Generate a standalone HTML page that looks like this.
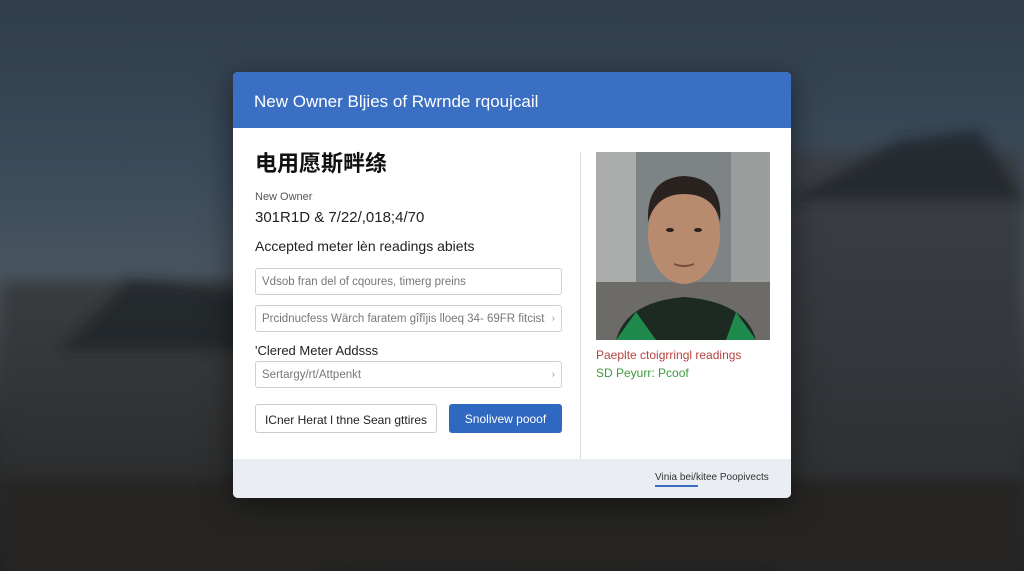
<!DOCTYPE html>
<html><head><meta charset="utf-8"><style>
*{margin:0;padding:0;box-sizing:border-box}
body{width:1024px;height:571px;overflow:hidden;font-family:"Liberation Sans","Noto Sans CJK SC",sans-serif;position:relative;
background:linear-gradient(180deg,#2f3d4c 0%,#3b4b5a 30%,#4a5661 50%,#2b2f33 75%,#1c1e20 100%)}
.bg1{position:absolute;left:0;top:280px;width:330px;height:291px;background:linear-gradient(180deg,#3a3d40,#262626);filter:blur(8px)}
.bg2{position:absolute;left:780px;top:150px;width:244px;height:421px;background:linear-gradient(180deg,#3c4046,#2a2c2e);filter:blur(8px)}
.bg3{position:absolute;left:0;top:480px;width:1024px;height:91px;background:#262523;filter:blur(6px)}
.card{position:absolute;left:233px;top:72px;width:558px;height:426px;background:#fff;border-radius:5px;overflow:hidden;box-shadow:0 6px 30px rgba(0,0,0,.5)}
.hd{height:56px;background:#3a6fc4;color:#fff;font-size:17px;padding:20px 0 0 21px}
.t{position:absolute;font-size:13px;color:#222;white-space:nowrap}
.in{position:absolute;left:22px;width:307px;height:27px;border:1px solid #cfcfcf;border-radius:3px;font-size:11.5px;color:#777;padding:7px 0 0 6px;white-space:nowrap;overflow:hidden}
.in span{position:absolute;right:6px;top:7px;color:#999;font-size:10px}
.ft{position:absolute;left:0;top:387px;width:558px;height:39px;background:#eaedf3}
</style></head><body>
<div class="bg1"></div><div class="bg2"></div><div class="bg3"></div>
<svg style="position:absolute;left:0;top:0" width="1024" height="571"><g fill="#1e2226" opacity=".7" filter="url(#b)"><path d="M60 350 L130 280 L230 290 L300 350 Z"/><path d="M790 200 L900 140 L980 130 L1024 200 Z"/></g><defs><filter id="b"><feGaussianBlur stdDeviation="6"/></filter></defs></svg>
<div class="card">
<div class="hd">New Owner Bljies of Rwrnde rqoujcail</div>
<div class="t" style="left:22px;top:74px;font-size:22px;font-weight:bold;color:#111">电用愿斯畔绦</div>
<div class="t" style="left:22px;top:119px;font-size:11px;color:#555">New Owner</div>
<div class="t" style="left:22px;top:137px;font-size:15px">301R1D &amp; 7/22/,018;4/70</div>
<div class="t" style="left:22px;top:166px;font-size:14px">Accepted meter lèn readings abiets</div>
<div class="in" style="top:196px">Vdsob fran del of cqoures, timerg preins</div>
<div class="in" style="top:233px">Prcidnucfess Wärch faratem gîfîjis lloeq 34- 69FR fitcist<span>›</span></div>
<div class="t" style="left:22px;top:271px;font-size:13px">'Clered Meter Addsss</div>
<div class="in" style="top:289px">Sertargy/rt/Attpenkt<span>›</span></div>
<div style="position:absolute;left:22px;top:332px;width:182px;height:29px;border:1px solid #ccc;border-radius:3px;font-size:12px;color:#222;text-align:center;padding-top:8px">ICner Herat l thne Sean gttires</div>
<div style="position:absolute;left:216px;top:332px;width:113px;height:29px;background:#2f68c0;border-radius:3px;font-size:12px;color:#fff;text-align:center;padding-top:8px">Snolivew pooof</div>
<div style="position:absolute;left:347px;top:80px;width:1px;height:307px;background:#ddd"></div>
<svg style="position:absolute;left:363px;top:80px" width="174" height="188"><rect width="174" height="188" fill="#7e8486"/><rect x="0" y="0" width="40" height="188" fill="#a9acab"/><rect x="135" y="0" width="39" height="188" fill="#9a9d9c"/><rect x="0" y="130" width="174" height="58" fill="#6c6b68"/><ellipse cx="88" cy="82" rx="36" ry="50" fill="#b88a6e"/><path d="M52 70 Q50 26 88 24 Q128 26 124 70 Q118 42 88 42 Q60 42 52 70Z" fill="#2a221e"/><path d="M20 188 Q30 150 88 145 Q150 150 160 188Z" fill="#1c2a22"/><path d="M20 188 L40 160 L60 188Z M130 188 L140 160 L160 188Z" fill="#1f8a4c"/><ellipse cx="74" cy="78" rx="4" ry="2" fill="#2a1f1a"/><ellipse cx="102" cy="78" rx="4" ry="2" fill="#2a1f1a"/><path d="M78 112 Q88 116 98 112" stroke="#7a4a3a" stroke-width="2" fill="none"/></svg>
<div class="t" style="left:363px;top:276px;font-size:12px;color:#b5433d">Paeplte ctoigrringl readings</div>
<div class="t" style="left:363px;top:294px;font-size:12px;color:#3d9a3d">SD Peyurr: Pcoof</div>
<div class="ft"></div>
<div class="t" style="left:422px;top:400px;font-size:10px;color:#333">Vinia bei/kitee Poopivects</div>
<div style="position:absolute;left:422px;top:413px;width:43px;height:2px;background:#3a6fc4"></div>
</div>
</body></html>
